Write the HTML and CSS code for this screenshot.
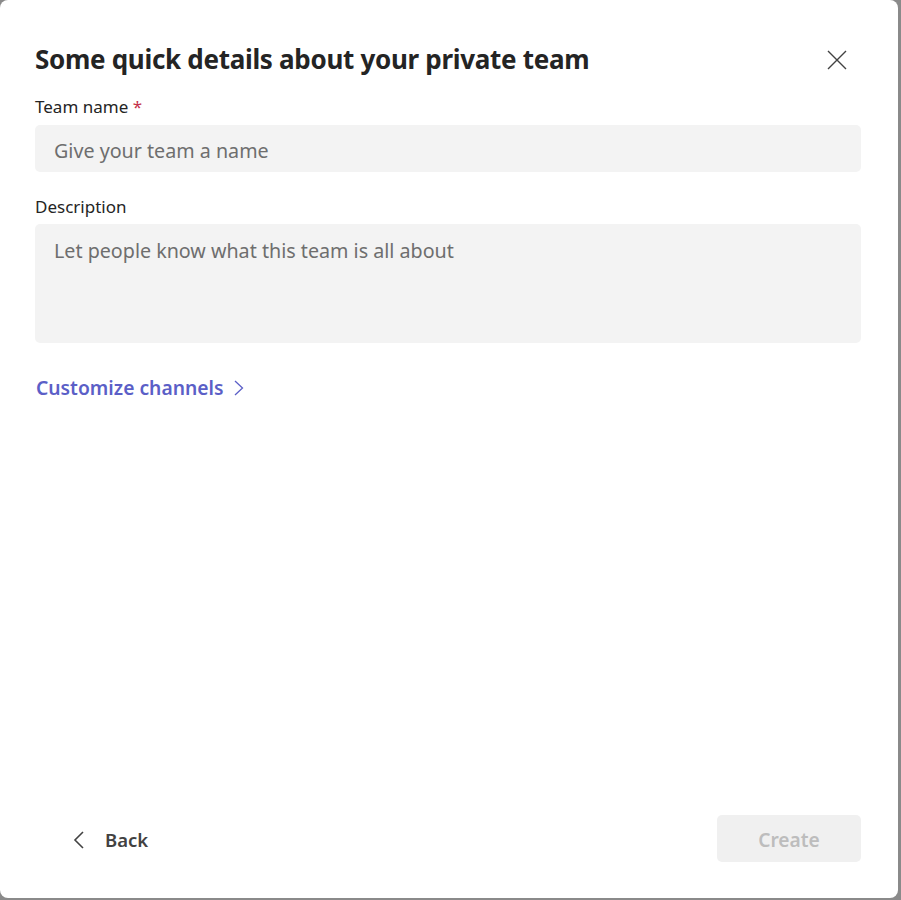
FILE: index.html
```html
<!DOCTYPE html>
<html lang="en">
<head>
<meta charset="utf-8">
<title>Create team</title>
<link rel="stylesheet" href="styles.css">
</head>
<body>
<div class="dialog" role="dialog" aria-labelledby="dlg-title">
  <div class="header">
    <h1 id="dlg-title" class="title">Some quick details about your private team</h1>
    <button class="close" aria-label="Close">
      <svg width="20" height="20" viewBox="0 0 20 20"><path d="M1 1 L19 19 M19 1 L1 19" stroke="#424242" stroke-width="1.4" fill="none"/></svg>
    </button>
  </div>
  <label class="label" for="team-name">Team name <span class="req">*</span></label>
  <input id="team-name" class="input" type="text" placeholder="Give your team a name">
  <label class="label label-desc" for="team-desc">Description</label>
  <textarea id="team-desc" class="textarea" placeholder="Let people know what this team is all about"></textarea>
  <a class="link" href="#">Customize channels
    <svg class="link-chev" width="12" height="16" viewBox="0 0 12 16"><path d="M2 1 L9.5 8 L2 15" stroke="#5b5fc7" stroke-width="1.3" fill="none"/></svg>
  </a>
  <div class="footer">
    <button class="back">
      <svg width="12" height="18" viewBox="0 0 12 18"><path d="M10 1 L2 9 L10 17" stroke="#424242" stroke-width="1.6" fill="none"/></svg>
      <span>Back</span>
    </button>
    <button class="create" disabled>Create</button>
  </div>
</div>
</body>
</html>
```
FILE: styles.css
```css
html, body {
  margin: 0;
  padding: 0;
  height: 100%;
}
body {
  background: #8a8a8a;
  font-family: "Noto Sans", "Open Sans", sans-serif;
  color: #242424;
}
.dialog {
  width: 898px;
  height: 898px;
  background: #ffffff;
  border-radius: 8px;
  box-sizing: border-box;
  padding: 41px 37px 36px 35px;
  display: flex;
  flex-direction: column;
}
.header {
  display: flex;
  justify-content: space-between;
  align-items: center;
  height: 36px;
  margin-bottom: 19px;
}
.title {
  margin: 0;
  font-size: 26px;
  font-weight: 700;
  line-height: 34px;
  color: #242424;
  letter-spacing: -0.3px;
}
.close {
  background: none;
  border: 0;
  padding: 0;
  width: 20px;
  height: 20px;
  margin-right: 14px;
  margin-top: 2px;
  display: flex;
  cursor: pointer;
}
.label {
  font-size: 17px;
  line-height: 22px;
  color: #242424;
  margin-bottom: 7px;
}
.req {
  color: #c4314b;
}
.label-desc {
  margin-top: 24px;
  margin-bottom: 6px;
}
.input, .textarea {
  font-family: inherit;
  font-size: 19.7px;
  color: #242424;
  background: #f3f3f3;
  border: 0;
  border-radius: 5px;
  padding: 0 19px;
  box-sizing: border-box;
  width: 100%;
  outline: none;
}
.input {
  height: 47px;
  padding-top: 3px;
}
.textarea {
  height: 119px;
  padding-top: 13px;
  resize: none;
  line-height: 27px;
}
.input::placeholder, .textarea::placeholder {
  color: #6e6e6e;
  opacity: 1;
}
.link {
  margin-top: 32px;
  display: flex;
  align-items: center;
  gap: 9px;
  align-self: flex-start;
  font-size: 19.3px;
  line-height: 26px;
  font-weight: 600;
  color: #5b5fc7;
  text-decoration: none;
  margin-left: 1px;
}
.footer {
  margin-top: auto;
  display: flex;
  justify-content: space-between;
  align-items: center;
}
.back {
  background: none;
  border: 0;
  display: flex;
  align-items: center;
  gap: 20px;
  padding: 2px 0 0 38px;
  font-family: inherit;
  font-size: 18.5px;
  font-weight: 600;
  color: #424242;
  height: 47px;
}
.create {
  width: 144px;
  height: 47px;
  border: 0;
  border-radius: 5px;
  background: #f0f0f0;
  color: #bdbdbd;
  font-family: inherit;
  font-size: 19.2px;
  font-weight: 600;
  padding-top: 2px;
}
```
